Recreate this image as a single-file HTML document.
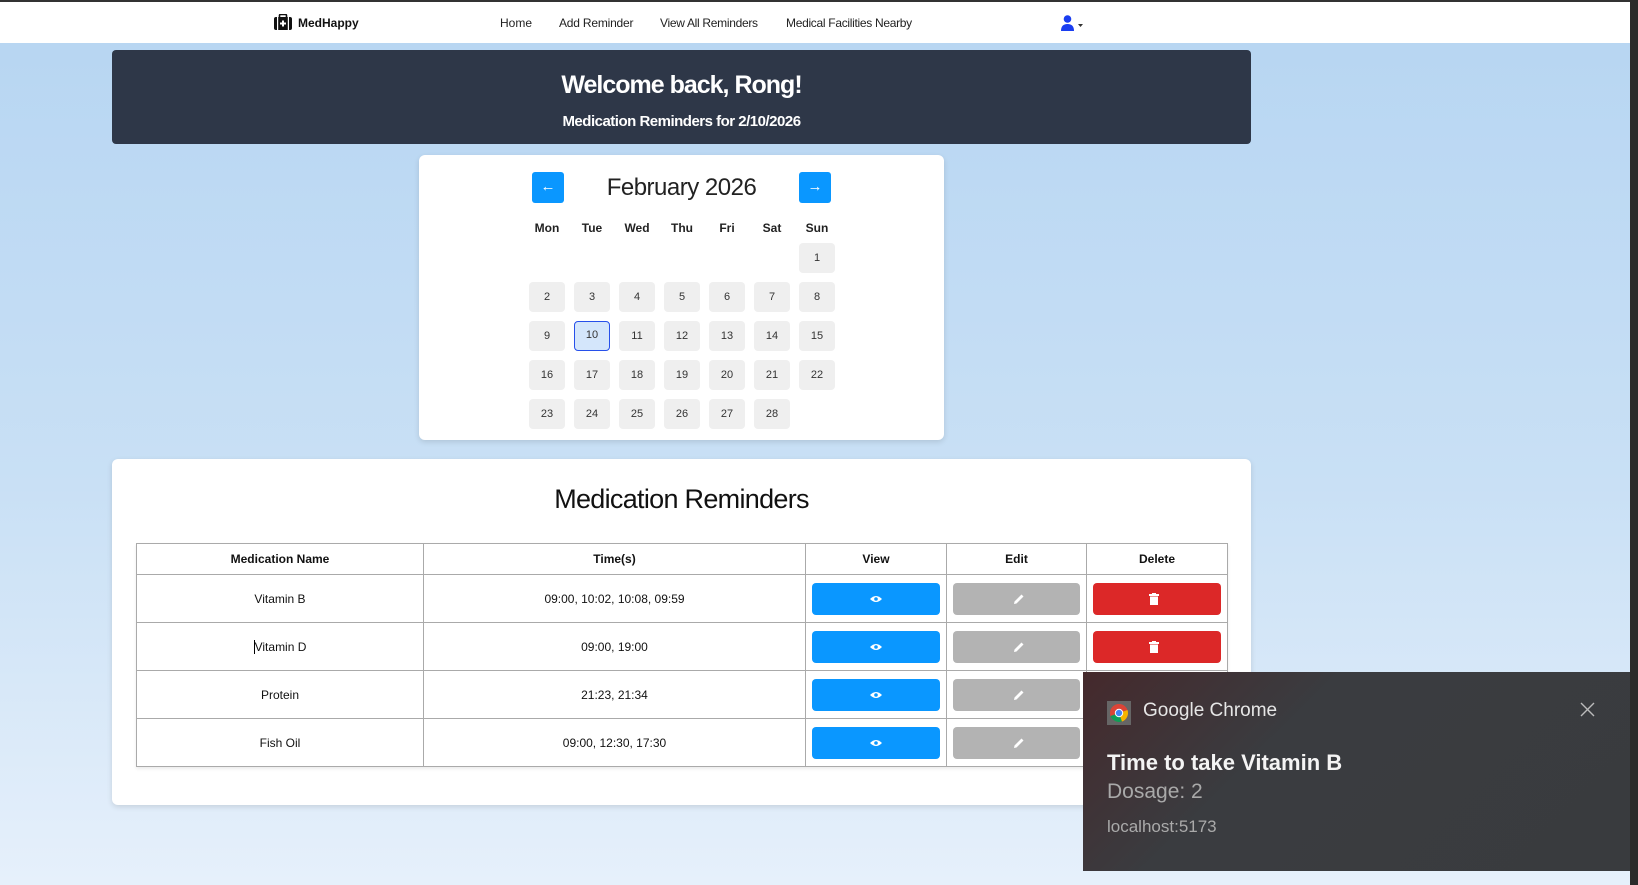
<!DOCTYPE html>
<html><head><meta charset="utf-8"><style>
*{box-sizing:border-box;margin:0;padding:0}
body{width:1638px;height:885px;overflow:hidden;font-family:"Liberation Sans",sans-serif;background:linear-gradient(180deg,#b6d5f2 0%,#c9e0f5 55%,#e6f0fb 100%);position:relative;color:#111}
.topbar{position:absolute;left:0;top:0;width:1630px;height:2px;background:#333}
.nav{position:absolute;left:0;top:2px;width:1630px;height:41px;background:#fff;font-size:12px}
.nav span{position:absolute;top:14px;color:#222}
.scroll{position:absolute;right:0;top:0;width:8px;height:885px;background:#2b2b2b}
.abs{position:absolute}
.banner{left:112px;top:50px;width:1139px;height:94px;background:#2e3748;border-radius:4px;color:#fff;text-align:center}
.card{background:#fff;border-radius:6px;box-shadow:0 2px 6px rgba(0,0,0,.12)}
.cal{left:419px;top:155px;width:525px;height:285px}
.nb{position:absolute;width:32px;height:31px;background:#0a97ff;border-radius:3px;color:#fff;font-size:15px;text-align:center;line-height:30px}
.wd{position:absolute;top:66px;width:36px;text-align:center;font-size:12px;font-weight:bold;color:#222}
.d{position:absolute;width:36px;height:30px;background:#efefef;border-radius:4px;font-size:11px;text-align:center;line-height:30px;color:#333}
.d.sel{background:#d4e6fb;border:1.5px solid #2750ea;line-height:27px}
.c2{left:112px;top:459px;width:1139px;height:346px}
table{position:absolute;left:24px;top:84px;border-collapse:collapse;font-size:12px;box-shadow:0 2px 3px rgba(0,0,0,.08)}
td,th{border:1.3px solid #aaa;text-align:center;color:#111}
th{height:31px;font-size:12px}
td{height:48px}
.b{display:block;margin:0 6px;height:32px;border-radius:4px;position:relative}
.bv{background:#0a97ff}.be{background:#b3b3b3}.bd{background:#dc2828}
.notif{position:absolute;left:1083px;top:672px;width:547px;height:199px;background:linear-gradient(135deg,#45292c 0%,#3a3c40 35%,#393b3e 100%);color:#fff;font-family:"Liberation Sans",sans-serif}
</style></head><body>
<div class="topbar"></div>
<div class="nav">
<svg class="abs" style="left:274px;top:12px" width="18" height="16" viewBox="0 0 18 16"><rect x="5.5" y="0.5" width="7" height="4" rx="1" fill="none" stroke="#111" stroke-width="1.6"/><rect x="0" y="3" width="18" height="13" rx="2" fill="#111"/><rect x="3" y="3" width="1.2" height="13" fill="#fff"/><rect x="13.8" y="3" width="1.2" height="13" fill="#fff"/><rect x="8" y="6.5" width="2" height="6" fill="#fff"/><rect x="6" y="8.5" width="6" height="2" fill="#fff"/></svg>
<span style="left:298px;font-weight:bold;color:#111">MedHappy</span>
<span style="left:500px">Home</span>
<span style="left:559px;letter-spacing:-0.2px">Add Reminder</span>
<span style="left:660px;letter-spacing:-0.3px">View All Reminders</span>
<span style="left:786px;letter-spacing:-0.3px">Medical Facilities Nearby</span>
<svg class="abs" style="left:1061px;top:13px" width="24" height="16" viewBox="0 0 24 16"><circle cx="6.5" cy="4" r="3.8" fill="#1a3df0"/><path d="M0 16 Q0 9 6.5 9 Q13 9 13 16Z" fill="#1a3df0"/><path d="M17 9 L22 9 L19.5 12Z" fill="#333"/></svg>
</div>
<div class="scroll"></div>

<div class="abs banner">
<div style="position:absolute;top:21px;width:100%;font-size:25px;font-weight:bold;letter-spacing:-1px">Welcome back, Rong!</div>
<div style="position:absolute;top:63px;width:100%;font-size:15px;font-weight:bold;letter-spacing:-0.5px">Medication Reminders for 2/10/2026</div>
</div>

<div class="abs card cal">
<div class="nb" style="left:113px;top:17px">←</div>
<div style="position:absolute;left:0;width:525px;top:19px;text-align:center;font-size:24px;color:#222;letter-spacing:-0.5px">February 2026</div>
<div class="nb" style="left:380px;top:17px">→</div>
<div class="wd" style="left:110px">Mon</div><div class="wd" style="left:155px">Tue</div><div class="wd" style="left:200px">Wed</div><div class="wd" style="left:245px">Thu</div><div class="wd" style="left:290px">Fri</div><div class="wd" style="left:335px">Sat</div><div class="wd" style="left:380px">Sun</div>
<div class="d" style="left:380px;top:88px">1</div>
<div class="d" style="left:110px;top:127px">2</div><div class="d" style="left:155px;top:127px">3</div><div class="d" style="left:200px;top:127px">4</div><div class="d" style="left:245px;top:127px">5</div><div class="d" style="left:290px;top:127px">6</div><div class="d" style="left:335px;top:127px">7</div><div class="d" style="left:380px;top:127px">8</div>
<div class="d" style="left:110px;top:166px">9</div><div class="d sel" style="left:155px;top:166px">10</div><div class="d" style="left:200px;top:166px">11</div><div class="d" style="left:245px;top:166px">12</div><div class="d" style="left:290px;top:166px">13</div><div class="d" style="left:335px;top:166px">14</div><div class="d" style="left:380px;top:166px">15</div>
<div class="d" style="left:110px;top:205px">16</div><div class="d" style="left:155px;top:205px">17</div><div class="d" style="left:200px;top:205px">18</div><div class="d" style="left:245px;top:205px">19</div><div class="d" style="left:290px;top:205px">20</div><div class="d" style="left:335px;top:205px">21</div><div class="d" style="left:380px;top:205px">22</div>
<div class="d" style="left:110px;top:244px">23</div><div class="d" style="left:155px;top:244px">24</div><div class="d" style="left:200px;top:244px">25</div><div class="d" style="left:245px;top:244px">26</div><div class="d" style="left:290px;top:244px">27</div><div class="d" style="left:335px;top:244px">28</div>
</div>

<div class="abs card c2">
<div style="position:absolute;top:25px;width:100%;text-align:center;font-size:27px;color:#111;letter-spacing:-0.7px">Medication Reminders</div>
<table>
<tr><th style="width:287px">Medication Name</th><th style="width:382px">Time(s)</th><th style="width:141px">View</th><th style="width:140px">Edit</th><th style="width:141px">Delete</th></tr>
<tr><td>Vitamin B</td><td>09:00, 10:02, 10:08, 09:59</td><td><span class="b bv"><svg class="abs" style="left:58px;top:12px" width="12" height="8" viewBox="0 0 12 8"><path d="M0 4 Q6 -2 12 4 Q6 10 0 4Z" fill="#fff"/><circle cx="6" cy="4" r="1.8" fill="#0a97ff"/></svg></span></td><td><span class="b be"><svg class="abs" style="left:60px;top:10px" width="12" height="12" viewBox="0 0 12 12"><path d="M1 11 L1.5 8.5 L8.5 1.5 L10.5 3.5 L3.5 10.5Z" fill="#fff"/></svg></span></td><td><span class="b bd"><svg class="abs" style="left:56px;top:10px" width="10" height="12" viewBox="0 0 10 12"><rect x="0" y="1" width="10" height="2" fill="#fff"/><rect x="3" y="0" width="4" height="1.5" fill="#fff"/><rect x="1" y="3.5" width="8" height="8.5" fill="#fff"/></svg></span></td></tr>
<tr><td><span style="border-left:1px solid #000">V</span>itamin D</td><td>09:00, 19:00</td><td><span class="b bv"><svg class="abs" style="left:58px;top:12px" width="12" height="8" viewBox="0 0 12 8"><path d="M0 4 Q6 -2 12 4 Q6 10 0 4Z" fill="#fff"/><circle cx="6" cy="4" r="1.8" fill="#0a97ff"/></svg></span></td><td><span class="b be"><svg class="abs" style="left:60px;top:10px" width="12" height="12" viewBox="0 0 12 12"><path d="M1 11 L1.5 8.5 L8.5 1.5 L10.5 3.5 L3.5 10.5Z" fill="#fff"/></svg></span></td><td><span class="b bd"><svg class="abs" style="left:56px;top:10px" width="10" height="12" viewBox="0 0 10 12"><rect x="0" y="1" width="10" height="2" fill="#fff"/><rect x="3" y="0" width="4" height="1.5" fill="#fff"/><rect x="1" y="3.5" width="8" height="8.5" fill="#fff"/></svg></span></td></tr>
<tr><td>Protein</td><td>21:23, 21:34</td><td><span class="b bv"><svg class="abs" style="left:58px;top:12px" width="12" height="8" viewBox="0 0 12 8"><path d="M0 4 Q6 -2 12 4 Q6 10 0 4Z" fill="#fff"/><circle cx="6" cy="4" r="1.8" fill="#0a97ff"/></svg></span></td><td><span class="b be"><svg class="abs" style="left:60px;top:10px" width="12" height="12" viewBox="0 0 12 12"><path d="M1 11 L1.5 8.5 L8.5 1.5 L10.5 3.5 L3.5 10.5Z" fill="#fff"/></svg></span></td><td></td></tr>
<tr><td>Fish Oil</td><td>09:00, 12:30, 17:30</td><td><span class="b bv"><svg class="abs" style="left:58px;top:12px" width="12" height="8" viewBox="0 0 12 8"><path d="M0 4 Q6 -2 12 4 Q6 10 0 4Z" fill="#fff"/><circle cx="6" cy="4" r="1.8" fill="#0a97ff"/></svg></span></td><td><span class="b be"><svg class="abs" style="left:60px;top:10px" width="12" height="12" viewBox="0 0 12 12"><path d="M1 11 L1.5 8.5 L8.5 1.5 L10.5 3.5 L3.5 10.5Z" fill="#fff"/></svg></span></td><td></td></tr>
</table>
</div>

<div class="notif">
<svg class="abs" style="left:24px;top:29px" width="24" height="24" viewBox="0 0 24 24"><rect width="24" height="24" fill="#666"/><circle cx="12" cy="12" r="9" fill="#db4437"/><path d="M12 12 L3.5 15 A9 9 0 0 0 15 20.5Z" fill="#0f9d58"/><path d="M12 12 L20.5 9 A9 9 0 0 1 15 20.5Z" fill="#f4b400"/><circle cx="12" cy="12" r="4.2" fill="#fff"/><circle cx="12" cy="12" r="3.2" fill="#4285f4"/></svg>
<div class="abs" style="left:60px;top:28px;font-size:19px;color:#e6e6e6">Google Chrome</div>
<svg class="abs" style="left:497px;top:30px" width="15" height="15" viewBox="0 0 15 15"><path d="M1 1 L14 14 M14 1 L1 14" stroke="#bbb" stroke-width="1.4"/></svg>
<div class="abs" style="left:24px;top:78px;font-size:22px;font-weight:bold;color:#f4f4f4">Time to take Vitamin B</div>
<div class="abs" style="left:24px;top:108px;font-size:21px;color:#a9a9a9">Dosage: 2</div>
<div class="abs" style="left:24px;top:145px;font-size:17px;color:#aaa">localhost:5173</div>
</div>
</body></html>
